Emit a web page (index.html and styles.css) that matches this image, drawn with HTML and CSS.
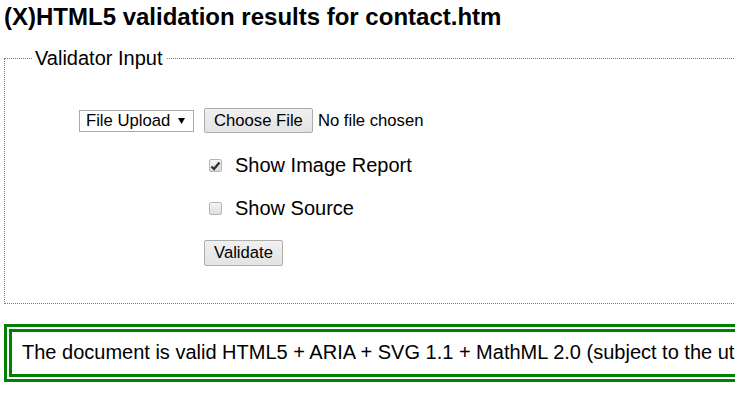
FILE: index.html
```html
<!DOCTYPE html>
<html lang="en">
<head>
<meta charset="utf-8">
<title>(X)HTML5 validation results for contact.htm</title>
<link rel="stylesheet" href="styles.css">
</head>
<body>
<h2 class="title">(X)HTML5 validation results for contact.htm</h2>
<form class="vform">
  <fieldset class="input-set">
    <legend class="input-legend">Validator Input</legend>
    <div class="grid">
      <div class="cell-left">
        <span class="select">File Upload <svg class="arrow" width="7" height="6" viewBox="0 0 7 6"><path d="M0 0H7L3.5 6Z" fill="#000"/></svg></span>
      </div>
      <div class="cell-right">
        <span class="btn">Choose File</span><span class="nofile">No file chosen</span>
      </div>
      <div class="cell-left"></div>
      <div class="cell-right">
        <span class="check checked"><svg width="11" height="10" viewBox="0 0 11 10"><path d="M1.5 5.5L4 8L9.5 1.5" stroke="#333" stroke-width="2.4" fill="none"/></svg></span><span class="label">Show Image Report</span>
      </div>
      <div class="cell-left"></div>
      <div class="cell-right">
        <span class="check"></span><span class="label">Show Source</span>
      </div>
      <div class="cell-left"></div>
      <div class="cell-right">
        <span class="btn btn-validate">Validate</span>
      </div>
    </div>
  </fieldset>
</form>
<div class="result">The document is valid HTML5 + ARIA + SVG 1.1 + MathML 2.0 (subject to the utmost respect for other rules)</div>
</body>
</html>
```
FILE: styles.css
```css
html, body {
  overflow: hidden;
}
body {
  margin: 0;
  padding: 0 0 0 4px;
  font-family: "Liberation Sans", Arial, sans-serif;
  font-size: 20px;
  color: #000;
  background: #fff;
}
.title {
  margin: 3px 0 16px 0;
  font-size: 24px;
  font-weight: bold;
  line-height: 27.6px;
  white-space: nowrap;
}
.vform {
  margin: 0;
}
.input-set {
  margin: 0;
  width: 900px;
  border: 1px dotted #777;
  padding: 0 0 26px 27px;
  box-sizing: border-box;
}
.input-legend {
  padding: 0 3px 0 3px;
  font-size: 20px;
  line-height: 23px;
}
.grid {
  display: grid;
  grid-template-columns: 115px auto;
  grid-template-rows: 44px 46px 40px 48px;
  column-gap: 10px;
  margin: 29px 0 0 47px;
}
.cell-left, .cell-right {
  display: flex;
  align-items: center;
}
.select {
  display: inline-flex;
  align-items: center;
  box-sizing: border-box;
  width: 115px;
  height: 22px;
  border: 1px solid #a9a9a9;
  background: #fff;
  font-size: 16.67px;
  padding: 0 0 0 6px;
}
.arrow {
  margin-left: 8px;
}
.btn {
  display: inline-flex;
  align-items: center;
  justify-content: center;
  box-sizing: border-box;
  height: 25px;
  padding: 0 9px;
  border: 1px solid #adadad;
  border-radius: 2px;
  background: linear-gradient(#f0f0f0, #e3e3e3);
  font-size: 16.67px;
  color: #000;
}
.btn-validate {
  height: 26px;
  padding: 0 8px;
  width: 79px;
}
.nofile {
  font-size: 16.67px;
  margin-left: 5px;
}
.check {
  display: inline-flex;
  align-items: center;
  justify-content: center;
  box-sizing: border-box;
  width: 13px;
  height: 13px;
  margin-left: 5px;
  border: 1px solid #b5b5b5;
  border-radius: 2px;
  background: linear-gradient(#f4f4f4, #dedede);
}
.label {
  margin-left: 13px;
}
.result {
  margin: 20px 0 0 0;
  width: 900px;
  box-sizing: border-box;
  border: 8px double #008000;
  padding: 9px 10px 10px 10px;
  line-height: 23px;
  white-space: nowrap;
}
```
